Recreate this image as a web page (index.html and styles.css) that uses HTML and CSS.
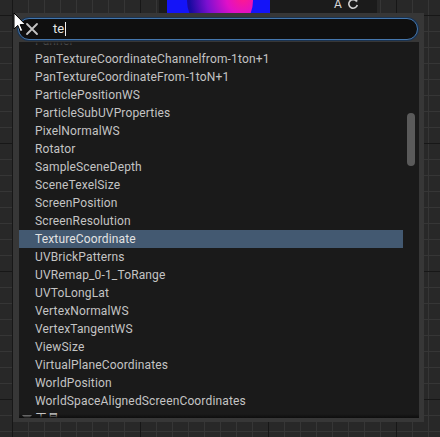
FILE: index.html
```html
<!DOCTYPE html>
<html lang="en">
<head>
<meta charset="utf-8">
<link rel="stylesheet" href="styles.css">
</head>
<body>
<div class="canvas">
  <div class="node">
    <div class="preview"><div class="sphere"></div></div>
    <div class="node-tools">
      <span class="node-a">A</span>
      <svg class="node-refresh" width="12" height="12" viewBox="0 0 12 12"><path d="M9.5 3.2A4.3 4.3 0 1 0 10.3 7" fill="none" stroke="#cfcfcf" stroke-width="1.6"/><path d="M7.6 1.2 L10.6 1.6 L10 4.6 Z" fill="#cfcfcf"/></svg>
    </div>
  </div>

  <div class="menu">
    <div class="search">
      <svg class="clear" width="14" height="14" viewBox="0 0 14 14"><path d="M2 2 L12 12 M12 2 L2 12" stroke="#c4c4c4" stroke-width="1.8" stroke-linecap="round"/></svg>
      <span class="query">te</span><span class="caret"></span>
    </div>
    <div class="list">
      <div class="rows">
        <div class="row dim">Panner</div>
        <div class="row">PanTextureCoordinateChannelfrom-1ton+1</div>
        <div class="row">PanTextureCoordinateFrom-1toN+1</div>
        <div class="row">ParticlePositionWS</div>
        <div class="row">ParticleSubUVProperties</div>
        <div class="row">PixelNormalWS</div>
        <div class="row">Rotator</div>
        <div class="row">SampleSceneDepth</div>
        <div class="row">SceneTexelSize</div>
        <div class="row">ScreenPosition</div>
        <div class="row">ScreenResolution</div>
        <div class="row selected">TextureCoordinate</div>
        <div class="row">UVBrickPatterns</div>
        <div class="row">UVRemap_0-1_ToRange</div>
        <div class="row">UVToLongLat</div>
        <div class="row">VertexNormalWS</div>
        <div class="row">VertexTangentWS</div>
        <div class="row">ViewSize</div>
        <div class="row">VirtualPlaneCoordinates</div>
        <div class="row">WorldPosition</div>
        <div class="row">WorldSpaceAlignedScreenCoordinates</div>
        <div class="row category"><svg class="arrow" width="10" height="8" viewBox="0 0 10 8"><path d="M0 0 H10 L5 6 Z" fill="#9a9a9a"/></svg><span>工具</span></div>
      </div>
      <div class="track"><div class="thumb"></div></div>
      <div class="fade-top"></div>
      <div class="fade-bottom"></div>
    </div>
  </div>

  <svg class="cursor" width="14" height="22" viewBox="0 0 14 22"><path d="M1 1 L1 17 L4.8 13.4 L7.4 19.6 L9.8 18.6 L7.2 12.6 L12.4 12.6 Z" fill="#ffffff" stroke="#000000" stroke-width="1" stroke-linejoin="round"/></svg>
</div>
</body>
</html>
```
FILE: styles.css
```css
* { box-sizing: border-box; }
html, body { margin: 0; padding: 0; }
body {
  font-family: Roboto, "Noto Sans", "Liberation Sans", "Noto Sans CJK SC", sans-serif;
}
.canvas {
  position: relative;
  width: 440px;
  height: 437px;
  overflow: hidden;
  background-color: #282828;
  background-image:
    linear-gradient(to right, #171717 1px, transparent 1px),
    linear-gradient(to bottom, #171717 1px, transparent 1px),
    linear-gradient(to right, #363636 1px, transparent 1px),
    linear-gradient(to bottom, #363636 1px, transparent 1px);
  background-size: 128px 128px, 128px 128px, 16px 16px, 16px 16px;
  background-position: 12px 0, 0 15px, 12px 0, 0 15px;
}

/* graph node peeking at the top */
.node {
  position: absolute;
  left: 159px;
  top: -10px;
  width: 218px;
  height: 30px;
  background: #1b1b1b;
  display: flex;
  align-items: flex-start;
  padding-left: 8px;
}
.preview {
  width: 103px;
  height: 30px;
  background: #1414f8;
  position: relative;
  overflow: hidden;
}
.sphere {
  position: absolute;
  left: 20px;
  top: -22px;
  width: 66px;
  height: 66px;
  border-radius: 50%;
  background: radial-gradient(circle at 85% 45%, #ff1a8c 0%, #e010c8 25%, #7a10d0 55%, #1a0aa0 80%, #0c0c8c 100%);
}
.node-tools {
  display: flex;
  align-items: center;
  gap: 5px;
  margin-left: 64px;
  margin-top: 7px;
  height: 14px;
}
.node-a {
  color: #d8d8d8;
  font-size: 12px;
  line-height: 14px;
}
.node-refresh { display: block; }

/* search popup */
.menu {
  position: absolute;
  left: 13px;
  top: 13px;
  width: 411px;
  height: 409px;
  background: #373737;
  padding: 5px 5px 4px 6px;
  display: flex;
  flex-direction: column;
}
.search {
  height: 22px;
  width: 400px;
  margin-left: -1px;
  border-radius: 11px;
  background: #0f0f0f;
  border: 1px solid #4577ad;
  box-shadow: 0 0 0 1px #1b3350;
  display: flex;
  align-items: center;
  padding-left: 6px;
}
.clear { display: block; flex: none; }
.query {
  margin-left: 14px;
  color: #e6e6e6;
  font-size: 13px;
  line-height: 16px;
}
.caret {
  width: 1px;
  height: 14px;
  background: #f0f0f0;
  margin-left: 1px;
}
.list {
  position: relative;
  margin-top: 2px;
  flex: 1;
  background: #1a1a1a;
  overflow: hidden;
  display: flex;
}
.rows {
  width: 384px;
  margin-top: -10px;
}
.row {
  height: 18px;
  line-height: 18px;
  padding-left: 16px;
  font-size: 12px;
  letter-spacing: 0.15px;
  color: #c4c4c4;
  white-space: nowrap;
}
.row.dim { color: #8a8a8a; }
.row.selected {
  background: #435971;
  color: #e2e2e2;
}
.row.category {
  display: flex;
  align-items: center;
  padding-left: 3px;
  gap: 3px;
}
.arrow { display: block; }
.track {
  width: 16px;
  flex: none;
}
.thumb {
  margin: 71px 0 0 4px;
  width: 8px;
  height: 53px;
  border-radius: 4px;
  background: #5a5a5a;
}
.fade-top, .fade-bottom {
  position: absolute;
  left: 0;
  right: 0;
  height: 6px;
  pointer-events: none;
}
.fade-top { top: 0; background: linear-gradient(#1a1a1a, rgba(26,26,26,0)); }
.fade-bottom { bottom: 0; height: 4px; background: linear-gradient(rgba(10,10,10,0), #0d0d0d); }

.cursor {
  position: absolute;
  left: 13px;
  top: 12px;
}
```
